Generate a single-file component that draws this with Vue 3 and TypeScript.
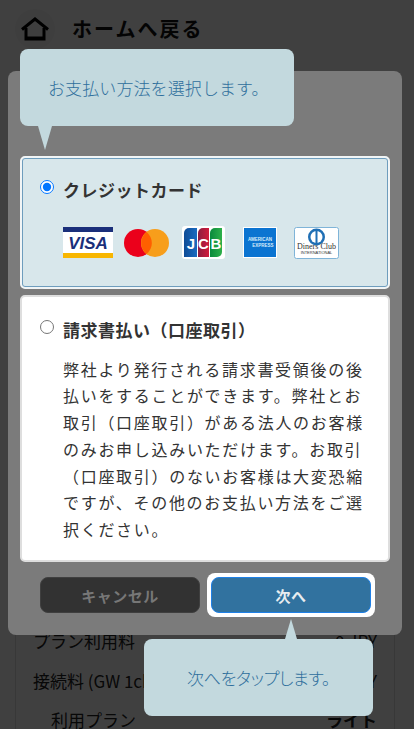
<script setup lang="ts">
const description =
  '弊社より発行される請求書受領後の後払いをすることができます。弊社とお取引（口座取引）がある法人のお客様のみお申し込みいただけます。お取引（口座取引）のないお客様は大変恐縮ですが、その他のお支払い方法をご選択ください。'
</script>

<template>
  <div class="page">
    <header class="top">
      <span class="home">
        <svg width="30" height="24" viewBox="0 0 30 24" fill="none" stroke="#000" stroke-width="3">
          <path d="M2 12.500 15 2l13 10.500" />
          <path d="M6 11v11h18V11" />
          <path d="M6 21h18" />
        </svg>
      </span>
      <span class="back">ホームへ戻る</span>
    </header>
    <section class="summary">
      <div class="row"><span>プラン利用料</span><span>0 JPY</span></div>
      <div class="row"><span>接続料 (GW 1ch)</span><span>0 JPY</span></div>
      <div class="row sub"><span>利用プラン</span><b>ライト</b></div>
    </section>

    <div class="overlay"></div>

    <div class="modal">
      <label class="option selected">
        <span class="head">
          <input type="radio" name="pay" checked />
          <span class="name">クレジットカード</span>
        </span>
        <span class="logos">
          <svg class="visa" width="50" height="31" viewBox="0 0 50 31">
            <rect width="50" height="31" fill="#fff" />
            <rect width="50" height="5" fill="#1a2f7a" />
            <rect y="26" width="50" height="5" fill="#f8b600" />
            <text x="25" y="21.500" class="visa-text">VISA</text>
          </svg>
          <svg class="mc" width="45" height="28" viewBox="0 0 45 28">
            <circle cx="14" cy="14" r="14" fill="#eb001b" />
            <circle cx="31" cy="14" r="14" fill="#f79e1b" />
            <path d="M22.500 3a14 14 0 0 1 0 22 14 14 0 0 1 0-22z" fill="#ff5f00" />
          </svg>
          <svg class="jcb" width="43" height="33" viewBox="0 0 43 33">
            <defs>
              <linearGradient id="jb" x1="0" x2="1" y1="0" y2="0">
                <stop offset="0" stop-color="#0e4c96" />
                <stop offset="1" stop-color="#1a6bc0" />
              </linearGradient>
              <linearGradient id="jr" x1="0" x2="1" y1="0" y2="0">
                <stop offset="0" stop-color="#8c1d3f" />
                <stop offset="1" stop-color="#d11a3c" />
              </linearGradient>
              <linearGradient id="jg" x1="0" x2="1" y1="0" y2="0">
                <stop offset="0" stop-color="#0a8a3c" />
                <stop offset="1" stop-color="#2db04a" />
              </linearGradient>
            </defs>
            <rect width="43" height="33" rx="3" fill="#fff" />
            <path d="M2 7a5 5 0 0 1 5-5h8v29H2z" fill="url(#jb)" />
            <path d="M16 7a5 5 0 0 1 5-5h6v29H16z" fill="url(#jr)" />
            <path d="M28 7a5 5 0 0 1 5-5h7v24a5 5 0 0 1-5 5h-7z" fill="url(#jg)" />
            <text x="9" y="22.500" class="jcb-text">J</text>
            <text x="21.500" y="22.500" class="jcb-text">C</text>
            <text x="34" y="22.500" class="jcb-text">B</text>
          </svg>
          <svg class="amex" width="34" height="31" viewBox="0 0 34 31">
            <rect width="34" height="31" fill="#fff" />
            <rect x="1" y="1" width="32" height="29" fill="#0b74d1" />
            <text x="17" y="14" class="amex-text">AMERICAN</text>
            <text x="20" y="20" class="amex-text">EXPRESS</text>
          </svg>
          <svg class="diners" width="45" height="32" viewBox="0 0 45 32">
            <rect x=".5" y=".5" width="44" height="31" rx="2" fill="#fff" stroke="#7fb4d8" />
            <circle cx="22.500" cy="10" r="8.500" fill="#1f6fb5" />
            <circle cx="22.500" cy="10" r="6" fill="#fff" />
            <rect x="21.500" y="4" width="2" height="12" fill="#1f6fb5" />
            <text x="22.500" y="22" class="diners-text">Diners Club</text>
            <text x="22.500" y="27" class="diners-small">INTERNATIONAL</text>
          </svg>
        </span>
      </label>

      <label class="option plain">
        <span class="head">
          <input type="radio" name="pay" />
          <span class="name">請求書払い（口座取引）</span>
        </span>
        <span class="desc">{{ description }}</span>
      </label>

      <div class="actions">
        <button class="btn cancel" type="button">キャンセル</button>
        <span class="ring"><button class="btn next" type="button">次へ</button></span>
      </div>
    </div>

    <div class="tip tip-top">お支払い方法を選択します。</div>
    <div class="tip tip-bottom">次へをタップします。</div>
  </div>
</template>

<style>
html,
body {
  margin: 0;
  background: #fff;
}
</style>

<style scoped>
* {
  box-sizing: border-box;
}
.page {
  position: relative;
  width: 414px;
  height: 729px;
  overflow: hidden;
  background: #fff;
  color: #222;
  font-family: "Noto Sans CJK JP", "Noto Sans", sans-serif;
}
.top {
  display: flex;
  align-items: center;
  gap: 17px;
  height: 56px;
  padding-left: 15px;
}
.home {
  display: flex;
  align-items: center;
  justify-content: center;
  width: 40px;
  height: 40px;
  margin-top: 1px;
  border-radius: 50%;
  background: #f6f6f6;
}
.back {
  font-size: 20px;
  font-weight: 700;
  letter-spacing: 2px;
  color: #111;
}
.summary {
  margin: 564px 19px 0 15px;
  height: 130px;
  padding: 0 17px;
  border: 1px solid #ddd;
  font-size: 17px;
}
.row {
  display: flex;
  justify-content: space-between;
  align-items: center;
  height: 39.500px;
}
.row.sub {
  padding-left: 18px;
  height: 38px;
}
.overlay {
  position: absolute;
  inset: 0;
  background: rgba(0, 0, 0, 0.75);
}
.modal {
  position: absolute;
  left: 8px;
  top: 71px;
  width: 394px;
  height: 564px;
  padding: 85px 12px 0;
  border-radius: 8px;
  background: #7b7b7b;
}
.option {
  display: block;
  width: 370px;
  border-radius: 5px;
}
.selected {
  height: 133px;
  padding: 21px 18px 0 18px;
  background: #d8e7eb;
  border: 2px solid #f1f5f6;
  box-shadow: inset 0 0 0 1px #6e9dbd;
}
.plain {
  height: 267px;
  margin-top: 6px;
  padding: 22px 18px 0 18px;
  background: #fff;
  border: 2px solid #dedede;
}
.head {
  display: flex;
  align-items: flex-start;
  gap: 9px;
  height: 24px;
}
.head input {
  width: 14px;
  height: 14px;
  margin: 1px 0 0;
  flex: none;
  accent-color: #0075ff;
}
.name {
  font-size: 17px;
  font-weight: 700;
  letter-spacing: 0.5px;
  line-height: 22px;
  color: #333;
  white-space: nowrap;
}
.logos {
  display: flex;
  align-items: center;
  margin-top: 23px;
  margin-left: 23px;
  height: 33px;
}
.logos svg {
  flex: none;
  display: block;
}
.mc {
  margin-left: 11px;
}
.jcb {
  margin-left: 13px;
}
.amex {
  margin-left: 18px;
}
.diners {
  margin-left: 17px;
}
.visa-text {
  font: italic 700 17px "Liberation Sans", sans-serif;
  fill: #1a2f7a;
  text-anchor: middle;
}
.jcb-text {
  font: 700 15px "Liberation Sans", sans-serif;
  fill: #fff;
  text-anchor: middle;
}
.amex-text {
  font: 700 4.500px "Liberation Sans", sans-serif;
  fill: #d8ecfa;
  text-anchor: middle;
}
.diners-text {
  font: 8px "Liberation Serif", serif;
  fill: #333;
  text-anchor: middle;
}
.diners-small {
  font: 4px "Liberation Sans", sans-serif;
  fill: #333;
  text-anchor: middle;
}
.desc {
  display: block;
  margin: 12.500px 0 0 23px;
  font-size: 16px;
  line-height: 26.800px;
  letter-spacing: 1.7px;
  color: #333;
}
.actions {
  display: flex;
  align-items: center;
  gap: 7px;
  margin: 15px 0 0 20px;
}
.ring {
  display: block;
  margin: -4px 0;
  padding: 4px;
  border-radius: 8px;
  background: #fff;
}
.btn {
  display: block;
  width: 160px;
  height: 36px;
  padding: 0;
  border-radius: 8px;
  font-family: inherit;
  font-size: 15px;
  font-weight: 700;
  letter-spacing: 0.5px;
}
.cancel {
  border: 1px solid #3f3f3f;
  background: #323232;
  color: #777;
}
.next {
  border: 1.500px solid #1f80e6;
  background: #31729f;
  color: #e8edf0;
}
.tip {
  position: absolute;
  display: flex;
  align-items: center;
  height: 77px;
  border-radius: 8px;
  background: #c3d9de;
  color: #2f6f9c;
  font-size: 17px;
  font-weight: 300;
}
.tip::after {
  content: "";
  position: absolute;
  border-style: solid;
}
.tip-top {
  left: 20px;
  top: 49px;
  width: 274px;
  padding-left: 28px;
  letter-spacing: 0.1px;
}
.tip-top::after {
  left: 18px;
  top: 77px;
  border-width: 24px 7.500px 0;
  border-color: #c3d9de transparent transparent;
}
.tip-bottom {
  left: 144px;
  top: 639px;
  width: 229px;
  justify-content: center;
  font-feature-settings: "palt";
  letter-spacing: -0.3px;
}
.tip-bottom::after {
  left: 141px;
  top: -20px;
  border-width: 0 6px 20px;
  border-color: transparent transparent #c3d9de;
}
</style>
